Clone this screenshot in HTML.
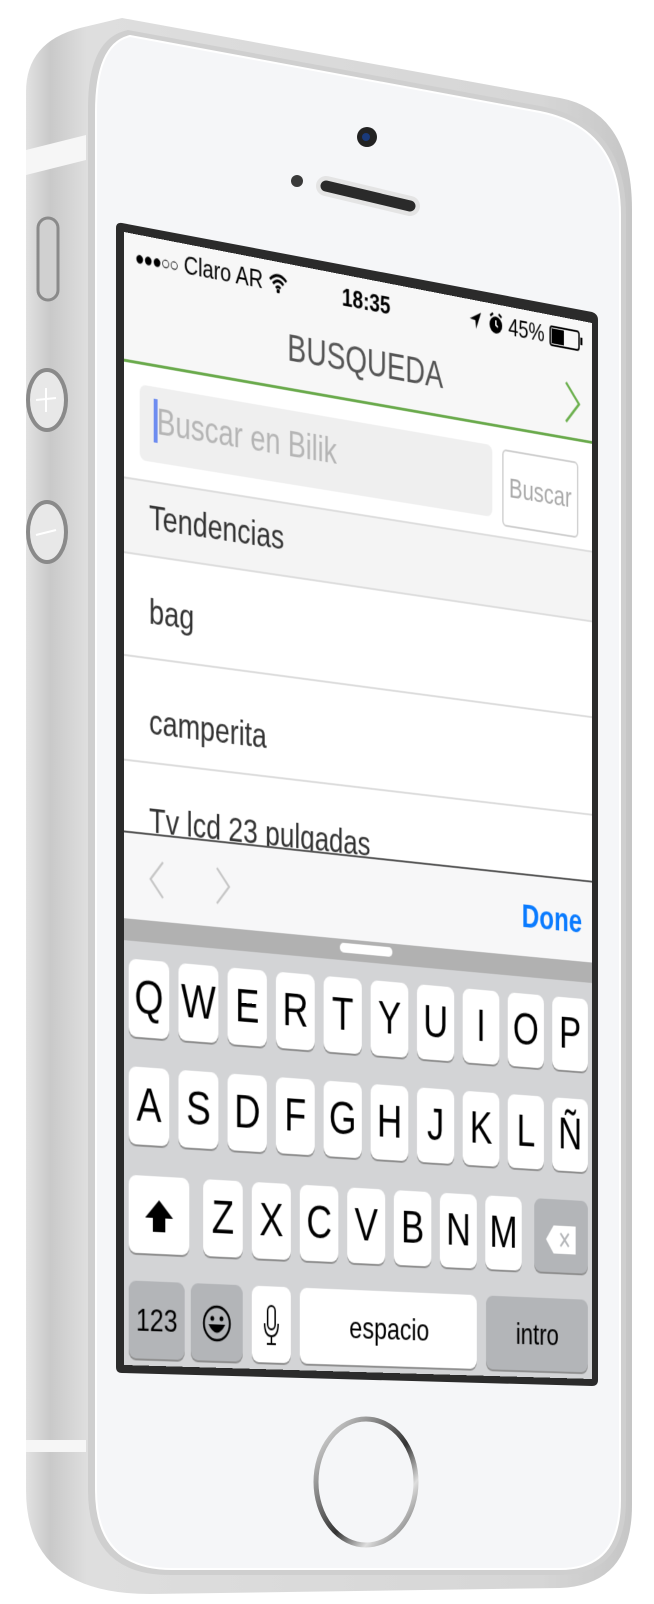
<!DOCTYPE html>
<html><head><meta charset="utf-8"><style>
html,body{margin:0;padding:0;background:#fff;}
body{width:654px;height:1604px;position:relative;overflow:hidden;font-family:"Liberation Sans",sans-serif;}
#scr{position:absolute;left:0;top:0;width:640px;height:1136px;overflow:hidden;background:#f7f7f7;
transform-origin:0 0;transform:matrix3d(0.7987,0.178988,0,0.00011393,0,0.99736,0,0,0,0,1,0,124,232,0,1);}
.a{position:absolute;}
.k{position:absolute;background:#fff;border-radius:9px;box-shadow:0 2px 0 #8e8e8e;color:#000;font-size:48px;text-align:center;line-height:78px;height:78px;width:52px;}
.g{background:#b3b5b8;}
.row{position:absolute;left:0;width:640px;background:#fff;border-bottom:2px solid #dcdcdc;box-sizing:border-box;height:105px;}
.row span{position:absolute;left:32px;font-size:35px;color:#333;}
</style></head><body>
<svg class="a" style="left:0;top:0" width="654" height="1604">
<defs>
<linearGradient id="side" x1="0" x2="1" y1="0" y2="0">
<stop offset="0" stop-color="#e2e2e2"/><stop offset="0.04" stop-color="#c9c9c9"/><stop offset="0.1" stop-color="#dedede"/><stop offset="0.85" stop-color="#d6d6d6"/><stop offset="1" stop-color="#c6c6c6"/>
</linearGradient>
<linearGradient id="hb" x1="0" y1="0" x2="1" y2="1">
<stop offset="0" stop-color="#eee"/><stop offset="0.3" stop-color="#888"/><stop offset="0.55" stop-color="#333"/><stop offset="0.75" stop-color="#ddd"/><stop offset="1" stop-color="#555"/>
</linearGradient>
</defs>
<path d="M122,18 L560,98 Q632,112 632,210 L632,1505 Q632,1585 560,1588 L150,1594 Q26,1594 26,1490 L26,92 Q26,42 80,28 Z" fill="url(#side)"/>
<path d="M26,150 L86,135 L86,160 L26,175 Z" fill="#f6f6f6"/>
<path d="M26,1440 L86,1440 L86,1452 L26,1452 Z" fill="#f6f6f6"/>
<path d="M128,30 L540,106 Q626,122 626,215 L626,1500 Q626,1575 560,1575 L170,1575 Q88,1575 88,1490 L88,108 Q88,38 128,30 Z" fill="#cfcfcf"/>
<path d="M130,36 L540,112 Q620,128 620,215 L620,1500 Q620,1569 560,1569 L172,1569 Q96,1569 96,1490 L96,112 Q96,44 130,36 Z" fill="#f5f6f8" stroke="#fff" stroke-width="2"/>
<rect x="38" y="218" width="20" height="82" rx="10" fill="#d0d0d0" stroke="#8a8a8a" stroke-width="3"/>
<ellipse cx="47" cy="400" rx="19" ry="30" fill="#e8e8e8" stroke="#8a8a8a" stroke-width="4"/>
<path d="M36,400 L56,398 M46,388 L46,412" stroke="#fff" stroke-width="2"/>
<ellipse cx="47" cy="532" rx="19" ry="30" fill="#e8e8e8" stroke="#8a8a8a" stroke-width="4"/>
<path d="M36,535 L56,530" stroke="#fff" stroke-width="2"/>
<circle cx="367" cy="137" r="10" fill="#222"/><circle cx="366" cy="137" r="4" fill="#1a3a7a"/>
<circle cx="297" cy="181" r="6" fill="#3a3a3a"/>
<path d="M326,186 L410,206" stroke="#e4e4e4" stroke-width="20" stroke-linecap="round"/>
<path d="M326,186 L410,206" stroke="#2a2a2a" stroke-width="11" stroke-linecap="round"/>
<path d="M116,228 Q116,222 122,223 L592,312 Q598,314 598,320 L598,1380 Q598,1386 592,1386 L122,1373 Q116,1373 116,1367 Z" fill="#2b2b2b"/>
<ellipse cx="366" cy="1482" rx="50" ry="63" fill="#f5f6f8" stroke="url(#hb)" stroke-width="5"/>
</svg>
<div id="scr">
 <div class="a" style="left:0;top:0;width:640px;height:128px;background:#f7f7f7;"></div>
 <div class="a" style="left:14px;top:6px;font-size:26px;color:#000;white-space:nowrap;"><span style="font-size:20px;letter-spacing:-1px">●●●○○</span> Claro AR <svg width="26" height="20" viewBox="0 0 26 20" style="vertical-align:-2px"><path d="M2,7 Q13,-3 24,7 M6,11 Q13,4 20,11 M10,15 Q13,12 16,15" stroke="#000" stroke-width="3" fill="none"/><circle cx="13" cy="18" r="2.2"/></svg></div>
 <div class="a" style="left:0;width:640px;top:8px;text-align:center;font-size:26px;font-weight:bold;color:#000;">18:35</div>
 <div class="a" style="right:12px;top:6px;font-size:26px;color:#000;white-space:nowrap;"><svg width="20" height="22" viewBox="0 0 20 22" style="vertical-align:-2px"><path d="M18,2 L2,10 L10,11 L11,20 Z"/></svg> <svg width="22" height="24" viewBox="0 0 22 24" style="vertical-align:-3px"><circle cx="11" cy="13" r="9"/><path d="M11,8 L11,13 L14,15" stroke="#fff" stroke-width="2" fill="none"/><path d="M3,4 L7,1 M19,4 L15,1" stroke="#000" stroke-width="2.5"/></svg> 45% <svg width="50" height="22" viewBox="0 0 50 22" style="vertical-align:-3px"><rect x="1" y="1" width="42" height="20" rx="3" fill="none" stroke="#000" stroke-width="2"/><rect x="3" y="3" width="18" height="16" fill="#000"/><rect x="45" y="7" width="3" height="8" fill="#000"/></svg></div>
 <div class="a" style="left:0;width:640px;top:66px;text-align:center;font-size:38px;color:#555;">BUSQUEDA</div>
 <svg class="a" style="left:596px;top:66px" width="30" height="48"><path d="M6,3 L25,24 L6,45" stroke="#6cb04e" stroke-width="3" fill="none"/></svg>
 <div class="a" style="left:0;top:127px;width:640px;height:3px;background:#6aaa4c;"></div>
 <div class="a" style="left:0;top:130px;width:640px;height:115px;background:#fff;"></div>
 <div class="a" style="left:20px;top:150px;width:476px;height:76px;background:#efefef;border-radius:8px;"></div>
 <div class="a" style="left:38px;top:162px;width:5px;height:44px;background:#6d8cf0;"></div>
 <div class="a" style="left:42px;top:164px;font-size:36px;color:#b5b5b5;">Buscar en Bilik</div>
 <div class="a" style="left:510px;top:152px;width:106px;height:78px;border:2px solid #cfcfcf;border-radius:6px;background:#fff;color:#aaa;font-size:29px;line-height:78px;text-align:center;">Buscar</div>
 <div class="a" style="left:0;top:245px;width:640px;height:75px;background:#f4f4f4;border-top:2px solid #ddd;box-sizing:border-box;"><span class="a" style="left:32px;top:16px;font-size:35px;color:#333;">Tendencias</span></div>
 <div class="row" style="top:320px;border-top:2px solid #ddd;"><span style="top:36px">bag</span></div>
 <div class="row" style="top:425px;"><span style="top:44px">camperita</span></div>
 <div class="row" style="top:530px;"><span style="top:38px">Tv lcd 23 pulgadas</span></div>
 <div class="a" style="left:0;top:600px;width:640px;height:88px;background:#f7f7f8;border-top:2px solid #555;"></div>
 <svg class="a" style="left:28px;top:624px" width="120" height="44"><path d="M22,4 L6,22 L22,40 M92,4 L108,22 L92,40" stroke="#c6c6c6" stroke-width="2.5" fill="none"/></svg>
 <div class="a" style="left:538px;top:626px;font-size:35px;font-weight:bold;color:#0a7bff;">Done</div>
 <div class="a" style="left:0;top:688px;width:640px;height:448px;background:#d3d4d6;"></div>
 <div class="a" style="left:0;top:688px;width:640px;height:22px;background:#b1b1b1;"></div>
 <div class="a" style="left:284px;top:692px;width:72px;height:10px;border-radius:5px;background:#fff;"></div>
 <div class="k" style="left:6px;top:728px">Q</div><div class="k" style="left:70px;top:728px">W</div><div class="k" style="left:134px;top:728px">E</div><div class="k" style="left:198px;top:728px">R</div><div class="k" style="left:262px;top:728px">T</div><div class="k" style="left:326px;top:728px">Y</div><div class="k" style="left:390px;top:728px">U</div><div class="k" style="left:454px;top:728px">I</div><div class="k" style="left:518px;top:728px">O</div><div class="k" style="left:582px;top:728px">P</div>
 <div class="k" style="left:6px;top:836px">A</div><div class="k" style="left:70px;top:836px">S</div><div class="k" style="left:134px;top:836px">D</div><div class="k" style="left:198px;top:836px">F</div><div class="k" style="left:262px;top:836px">G</div><div class="k" style="left:326px;top:836px">H</div><div class="k" style="left:390px;top:836px">J</div><div class="k" style="left:454px;top:836px">K</div><div class="k" style="left:518px;top:836px">L</div><div class="k" style="left:582px;top:836px">Ñ</div>
 <div class="k" style="left:6px;top:945px;width:78px;"><svg width="40" height="40" viewBox="0 0 40 40" style="vertical-align:-6px"><path d="M20,4 L38,22 L28,22 L28,36 L12,36 L12,22 L2,22 Z"/></svg></div>
 <div class="k" style="left:102px;top:945px">Z</div><div class="k" style="left:166px;top:945px">X</div><div class="k" style="left:230px;top:945px">C</div><div class="k" style="left:294px;top:945px">V</div><div class="k" style="left:358px;top:945px">B</div><div class="k" style="left:422px;top:945px">N</div><div class="k" style="left:486px;top:945px">M</div>
 <div class="k g" style="left:556px;top:945px;width:78px;"><svg width="46" height="34" viewBox="0 0 46 34" style="vertical-align:-6px"><path d="M12,2 L44,2 L44,32 L12,32 L1,17 Z" fill="#fff"/><path d="M22,10 L34,24 M34,10 L22,24" stroke="#b3b5b8" stroke-width="2.5"/></svg></div>
 <div class="k g" style="left:6px;top:1051px;width:72px;font-size:32px;">123</div>
 <div class="k g" style="left:86px;top:1051px;width:68px;"><svg width="40" height="40" viewBox="0 0 40 40" style="vertical-align:-6px"><circle cx="20" cy="20" r="17" fill="none" stroke="#000" stroke-width="2.5"/><circle cx="14" cy="15" r="2.5"/><circle cx="26" cy="15" r="2.5"/><path d="M9,21 Q20,38 31,21 Z"/></svg></div>
 <div class="k" style="left:166px;top:1051px;"><svg width="24" height="44" viewBox="0 0 24 44" style="vertical-align:-8px"><rect x="7" y="2" width="10" height="24" rx="5" fill="none" stroke="#000" stroke-width="2"/><path d="M3,20 Q3,33 12,33 Q21,33 21,20 M12,33 L12,41 M6,41 L18,41" stroke="#000" stroke-width="2" fill="none"/></svg></div>
 <div class="k" style="left:230px;top:1051px;width:244px;font-size:32px;">espacio</div>
 <div class="k g" style="left:487px;top:1051px;width:147px;font-size:32px;">intro</div>
</div>
</body></html>
